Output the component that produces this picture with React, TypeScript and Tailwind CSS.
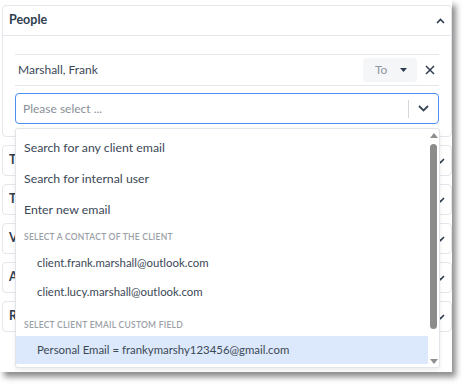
import React from "react";

const font = { fontFamily: "Lato, 'Noto Sans', sans-serif" };

function ChevronDown({ className = "" }: { className?: string }) {
  return (
    <svg width="9" height="6" viewBox="0 0 9 6" className={className}>
      <polyline points="1,1 4.5,4.5 8,1" fill="none" stroke="#2f3d4f" strokeWidth="1.6" />
    </svg>
  );
}

function ChevronUp({ className = "" }: { className?: string }) {
  return (
    <svg width="9" height="6" viewBox="0 0 9 6" className={className}>
      <polyline points="1,5 4.5,1.5 8,5" fill="none" stroke="#2f3d4f" strokeWidth="1.6" />
    </svg>
  );
}

function Card({ title }: { title: string }) {
  return (
    <div className="h-[31px] border border-[#e3e6ea] rounded-[4px] flex items-center justify-between pl-[6px] pr-[6px]">
      <span className="text-[12.5px] font-bold text-[#2f3d4f]">{title}</span>
      <ChevronDown />
    </div>
  );
}

export default function App() {
  return (
    <div className="w-[467px] h-[385px] bg-white" style={font}>
      <div className="relative w-[452px] h-[372px] bg-white shadow-[4px_5px_6px_rgba(0,0,0,0.45)] pl-[2px] pt-[5px]">
        <div className="w-[450px] flex flex-col gap-[8px]">
          <div className="border border-[#e3e6ea] rounded-[4px]">
            <div className="h-[30px] flex items-center justify-between pl-[6px] pr-[6px] border-b border-[#e3e6ea]">
              <span className="text-[12.5px] font-bold text-[#2f3d4f]">People</span>
              <ChevronUp />
            </div>
            <div className="px-[12px] pt-[18px] pb-[12px]">
              <div className="h-[32px] border-y border-[#e3e6ea] flex items-center justify-between">
                <span className="pl-[3px] text-[12px] text-[#3b4856]">Marshall, Frank</span>
                <div className="flex items-center gap-[8px]">
                  <div className="w-[54px] h-[24px] bg-[#f4f6f8] rounded-[3px] flex items-center justify-between pl-[12px] pr-[10px]">
                    <span className="text-[12px] text-[#9096a0]">To</span>
                    <svg width="7" height="4" viewBox="0 0 7 4">
                      <polygon points="0,0 7,0 3.5,4" fill="#2f3d4f" />
                    </svg>
                  </div>
                  <svg width="10" height="10" viewBox="0 0 10 10" className="mr-[4px]">
                    <path d="M1 1 L9 9 M9 1 L1 9" stroke="#2f3d4f" strokeWidth="1.5" />
                  </svg>
                </div>
              </div>
              <div className="mt-[7px] h-[31px] border-[1.5px] border-[#4a8ff0] rounded-[4px] flex items-center">
                <span className="flex-1 pl-[7px] text-[12px] text-[#8a9099]">Please select ...</span>
                <div className="w-px h-[18px] bg-[#d4d7db]" />
                <div className="w-[29px] flex justify-center">
                  <svg width="11" height="7" viewBox="0 0 11 7">
                    <polyline points="1,1 5.5,5.5 10,1" fill="none" stroke="#3b4856" strokeWidth="1.8" />
                  </svg>
                </div>
              </div>
            </div>
          </div>
          <Card title="Tasks" />
          <Card title="Tags" />
          <Card title="Visibility" />
          <Card title="Attachments" />
          <Card title="Related" />
        </div>

        <div className="absolute left-[15px] top-[128px] w-[425px] h-[240px] bg-white border border-[#e1e4e8] rounded-[3px] shadow-[0_2px_4px_rgba(0,0,0,0.08)] flex overflow-hidden">
          <div className="flex-1 pt-[4px] text-[#3b4856]">
            <div className="h-[31px] flex items-center pl-[8px] text-[12.3px]">Search for any client email</div>
            <div className="h-[31px] flex items-center pl-[8px] text-[12.3px]">Search for internal user</div>
            <div className="h-[31px] flex items-center pl-[8px] text-[12.3px]">Enter new email</div>
            <div className="h-[22px] flex items-center pl-[8px] text-[8.5px] font-semibold uppercase text-[#9aa0a6] tracking-[0.03em]">Select a contact of the client</div>
            <div className="h-[29px] flex items-center pl-[21px] text-[11.4px]">client.frank.marshall@outlook.com</div>
            <div className="h-[29px] flex items-center pl-[21px] text-[11.4px]">client.lucy.marshall@outlook.com</div>
            <div className="mt-[8px] h-[22px] flex items-center pl-[8px] text-[8.5px] font-semibold uppercase text-[#9aa0a6] tracking-[0.03em]">Select client email custom field</div>
            <div className="h-[28px] flex items-center pl-[21px] text-[11.4px] bg-[#dce8fb]">Personal Email = frankymarshy123456@gmail.com</div>
          </div>
          <div className="w-[11px] flex flex-col items-center pt-[4px] pb-[3px]">
            <svg width="8" height="5" viewBox="0 0 8 5">
              <polygon points="0,5 8,5 4,0" fill="#8f8f8f" />
            </svg>
            <div className="mt-[6px] w-[7px] h-[185px] rounded-full bg-[#8c8c8c]" />
            <div className="flex-1" />
            <svg width="8" height="5" viewBox="0 0 8 5">
              <polygon points="0,0 8,0 4,5" fill="#8f8f8f" />
            </svg>
          </div>
        </div>
      </div>
    </div>
  );
}
